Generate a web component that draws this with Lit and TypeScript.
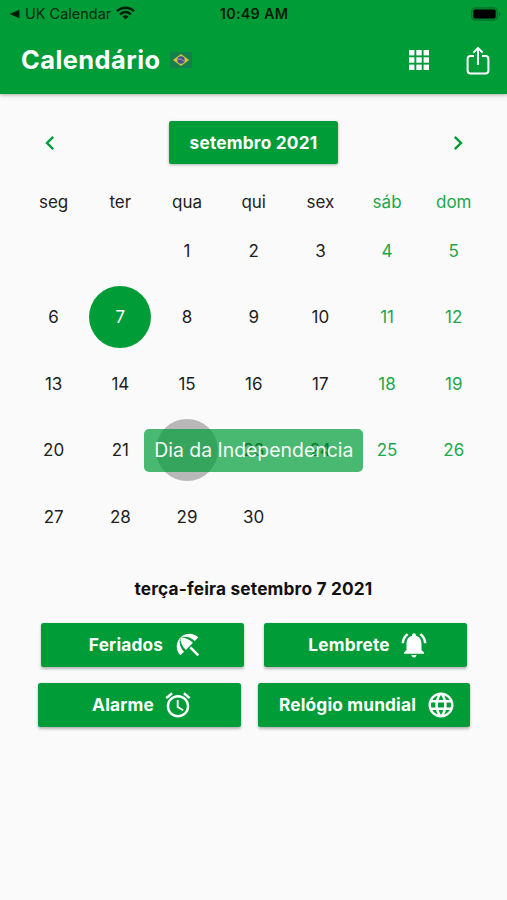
import { LitElement, html, css, svg } from "lit";
import { customElement, property, state } from "lit/decorators.js";
import { classMap } from "lit/directives/class-map.js";

const ICONS: Record<string, string> = {
  beach:
    "M13.127 14.56l1.43-1.43 6.44 6.443L19.57 21zM17.42 8.83l2.86-2.86c-3.95-3.95-10.35-3.96-14.3-.02 3.93-1.3 8.31-.25 11.44 2.88zM5.95 5.98c-3.94 3.95-3.93 10.35.02 14.3l2.86-2.86C5.7 14.29 4.65 9.91 5.95 5.98zM5.97 5.96l-.01.01c-.38 3.01 1.17 6.88 4.3 10.02l5.72-5.73c-3.13-3.13-7.01-4.68-10.01-4.3z",
  bell:
    "M7.58 4.08L6.15 2.65C3.75 4.48 2.17 7.3 2.03 10.5h2c.15-2.65 1.51-4.97 3.55-6.42zm12.39 6.42h2c-.15-3.2-1.73-6.02-4.12-7.85l-1.42 1.43c2.02 1.45 3.39 3.77 3.54 6.42zM18 11c0-3.07-1.64-5.64-4.5-6.32V4c0-.83-.67-1.5-1.5-1.5s-1.5.67-1.5 1.5v.68C7.63 5.36 6 7.92 6 11v5l-2 2v1h16v-1l-2-2v-5zm-6 11c.14 0 .27-.01.4-.04.65-.14 1.18-.58 1.44-1.18.1-.24.15-.5.15-.78h-4c.01 1.1.9 2 2.01 2z",
  alarm:
    "M22 5.72l-4.6-3.86-1.29 1.53 4.6 3.86L22 5.72zM7.88 3.39L6.6 1.86 2 5.71l1.29 1.53 4.59-3.85zM12.5 8H11v6l4.75 2.85.75-1.23-4-2.37V8zM12 4c-4.97 0-9 4.03-9 9s4.02 9 9 9c4.97 0 9-4.03 9-9s-4.03-9-9-9zm0 16c-3.87 0-7-3.13-7-7s3.13-7 7-7 7 3.13 7 7-3.13 7-7 7z",
  globe:
    "M11.99 2C6.47 2 2 6.48 2 12s4.47 10 9.99 10C17.52 22 22 17.52 22 12S17.52 2 11.99 2zm6.93 6h-2.95c-.32-1.25-.78-2.45-1.38-3.56 1.84.63 3.37 1.91 4.33 3.56zM12 4.04c.83 1.2 1.48 2.53 1.91 3.96h-3.82c.43-1.43 1.08-2.76 1.91-3.96zM4.26 14C4.1 13.36 4 12.69 4 12s.1-1.36.26-2h3.38c-.08.66-.14 1.32-.14 2 0 .68.06 1.34.14 2H4.26zm.82 2h2.95c.32 1.25.78 2.45 1.38 3.56-1.84-.63-3.37-1.9-4.33-3.56zm2.95-8H5.08c.96-1.66 2.49-2.93 4.33-3.56C8.81 5.55 8.35 6.75 8.03 8zM12 19.96c-.83-1.2-1.48-2.53-1.91-3.96h3.82c-.43 1.43-1.08 2.76-1.91 3.96zM14.34 14H9.66c-.09-.66-.16-1.32-.16-2 0-.68.07-1.35.16-2h4.68c.09.65.16 1.32.16 2 0 .68-.07 1.34-.16 2zm.25 5.56c.6-1.11 1.06-2.31 1.38-3.56h2.95c-.96 1.65-2.49 2.93-4.33 3.56zM16.36 14c.08-.66.14-1.32.14-2 0-.68-.06-1.34-.14-2h3.38c.16.64.26 1.31.26 2s-.1 1.36-.26 2h-3.38z",
};

@customElement("action-button")
class ActionButton extends LitElement {
  @property() label = "";
  @property() icon = "";

  static styles = css`
    :host {
      display: flex;
      align-items: center;
      justify-content: center;
      box-sizing: border-box;
      height: 44px;
      padding-left: 7.5px;
      gap: 9.5px;
      border-radius: 2.5px;
      background: #009c37;
      color: #fff;
      box-shadow: 0 1.5px 3px rgba(0, 0, 0, 0.28);
      font-weight: 700;
      font-size: 17.3px;
      letter-spacing: 0.16px;
      line-height: 22px;
      white-space: nowrap;
    }
    .icon {
      width: 30px;
      height: 30px;
      flex: none;
      fill: currentColor;
    }
  `;

  render() {
    return html`<span class="label">${this.label}</span>
      <svg class="icon" viewBox="0 0 24 24"><path d=${ICONS[this.icon]}></path></svg>`;
  }
}

@customElement("app-root")
class AppRoot extends LitElement {
  @state() selected = 7;
  @state() pressed = 22;

  static styles = css`
    :host {
      display: block;
      box-sizing: border-box;
      width: 507px;
      height: 900px;
      overflow: hidden;
      background: #fafafa;
      color: #1e1e1e;
      font-family: Inter, "Liberation Sans", sans-serif;
    }
    .header {
      height: 94px;
      background: #009c37;
      box-shadow: 0 1px 4px rgba(0, 0, 0, 0.32);
    }
    .status {
      display: grid;
      grid-template-columns: 1fr auto 1fr;
      align-items: center;
      height: 28px;
      padding: 0 5px 0 9px;
      color: #032a10;
      font-size: 14.4px;
      line-height: 18px;
    }
    .back {
      display: flex;
      align-items: center;
    }
    .back-arrow {
      width: 11px;
      height: 10px;
      margin-right: 5px;
    }
    .back-label {
      letter-spacing: 0.05px;
    }
    .wifi {
      width: 19px;
      height: 14px;
      margin-left: 5px;
      margin-top: -2px;
    }
    .time {
      font-weight: 600;
      letter-spacing: 0.25px;
      margin-right: 3px;
      color: #021c0a;
    }
    .battery {
      width: 32px;
      height: 14px;
      justify-self: end;
      margin-top: -1px;
    }
    .toolbar {
      display: flex;
      align-items: center;
      height: 64px;
      padding: 0 17.5px 0 21px;
    }
    .title {
      color: #fff;
      font-size: 25.4px;
      letter-spacing: 0.45px;
      line-height: 32px;
      font-weight: 700;
    }
    .flag {
      width: 22px;
      height: 16px;
      margin-left: 9px;
    }
    .apps {
      width: 20px;
      height: 20px;
      margin-left: auto;
      margin-right: 36.5px;
      fill: #fff;
    }
    .share {
      width: 24px;
      height: 30px;
      margin-top: 2px;
    }
    .month-bar {
      display: flex;
      align-items: center;
      justify-content: space-between;
      padding: 26.5px 43.5px 0 43.5px;
    }
    .chevron {
      width: 12px;
      height: 16px;
      margin-top: 1px;
      fill: none;
      stroke: #009c37;
      stroke-width: 2.4;
    }
    .month {
      width: 169px;
      height: 43.5px;
      border-radius: 2.5px;
      background: #009c37;
      box-shadow: 0 1px 3px rgba(0, 0, 0, 0.3);
      color: #fff;
      text-align: center;
      font-size: 17.3px;
      letter-spacing: 0.2px;
      font-weight: 700;
      line-height: 43.5px;
    }
    .week,
    .days {
      display: grid;
      grid-template-columns: repeat(7, 66.7px);
      margin-left: 20.3px;
      text-align: center;
      font-size: 17px;
    }
    .week {
      margin-top: 27px;
      height: 26.3px;
      line-height: 23px;
    }
    .days {
      grid-auto-rows: 66.6px;
      line-height: 62px;
    }
    .weekend {
      color: #1ca74d;
    }
    .day {
      width: 62px;
      height: 62px;
      margin: 2.3px auto;
      border-radius: 50%;
    }
    .selected {
      background: #009c37;
      color: #fff;
    }
    .pressed {
      background: #b8b8b8;
      color: #c6c6c6;
    }
    .calendar {
      position: relative;
    }
    .tooltip {
      position: absolute;
      left: 144.3px;
      top: 238px;
      width: 219px;
      height: 43px;
      border-radius: 5px;
      background: rgba(0, 156, 55, 0.71);
      color: #f4fbf6;
      text-align: center;
      font-size: 19.4px;
      line-height: 43px;
      white-space: nowrap;
    }
    .date {
      margin-top: 27.7px;
      height: 22px;
      text-align: center;
      font-size: 17.3px;
      letter-spacing: 0.17px;
      font-weight: 700;
      line-height: 22px;
      color: #111;
    }
    .actions {
      display: flex;
      justify-content: center;
      margin-top: 23px;
    }
    .actions + .actions {
      margin-top: 16.4px;
    }
    .regular {
      width: 203px;
    }
    .wide {
      width: 212px;
    }
    .gap-large {
      gap: 20px;
    }
    .gap-small {
      gap: 17px;
    }
  `;

  renderHeader() {
    return html`<header class="header">
      <div class="status">
        <div class="back">
          <svg class="back-arrow" viewBox="0 0 11 10"><path d="M0.5 5L10.5 0.8V9.2Z" fill="#021c0a" /></svg>
          <span class="back-label">UK Calendar</span>
          <svg class="wifi" viewBox="0 0 19 14">
            <g fill="none" stroke="#021c0a" stroke-width="2.4">
              <path d="M1 5.2C5.6 0.5 13.4 0.5 18 5.2" />
              <path d="M4.1 8.3C7.1 5.2 11.9 5.2 14.9 8.3" />
            </g>
            <path d="M6.5 10.5C8.2 8.9 10.8 8.9 12.5 10.5L9.5 13.5Z" fill="#021c0a" />
          </svg>
        </div>
        <span class="time">10:49 AM</span>
        <svg class="battery" viewBox="0 0 32 14">
          <rect x="1.5" y="0.8" width="26" height="12.4" rx="3.4" fill="#028630" stroke="#047029" />
          <rect x="3.4" y="2.6" width="22.2" height="8.8" rx="1.6" fill="#000" />
          <path d="M29 4.7Q31.6 7 29 9.3Z" fill="#046325" />
        </svg>
      </div>
      <div class="toolbar">
        <span class="title">Calendário</span>
        <svg class="flag" viewBox="0 0 22 16">
          <rect width="22" height="16" rx="1" fill="#16804a" />
          <path d="M11 2L19 8L11 14L3 8Z" fill="#d3c73c" />
          <circle cx="11" cy="8" r="3.7" fill="#485292" />
          <path d="M7.7 7Q11.5 6.2 14.2 9.4" fill="none" stroke="#a9b3cd" stroke-width="0.8" />
        </svg>
        <svg class="apps" viewBox="0 0 20 20">
          ${[0, 7.3, 14.6].map((y) =>
            [0, 7.3, 14.6].map((x) => svg`<rect x=${x} y=${y} width="5.4" height="5.4" />`)
          )}
        </svg>
        <svg class="share" viewBox="0 0 24 30" fill="none" stroke="#fff" stroke-width="2">
          <path d="M8 10H4.6Q1.6 10 1.6 13V24.6Q1.6 27.6 4.6 27.6H19.4Q22.4 27.6 22.4 24.6V13Q22.4 10 19.4 10H16" />
          <path d="M12 19V2.2M7.4 6.6L12 2L16.6 6.6" />
        </svg>
      </div>
    </header>`;
  }

  renderDay(day: number) {
    const col = (day + 1) % 7;
    return html`<div
      class=${classMap({
        day: true,
        weekend: col > 4,
        selected: day === this.selected,
        pressed: day === this.pressed,
      })}
    >${day}</div>`;
  }

  render() {
    const names = ["seg", "ter", "qua", "qui", "sex", "sáb", "dom"];
    return html`${this.renderHeader()}
      <main>
        <div class="month-bar">
          <svg class="chevron" viewBox="0 0 12 16"><path d="M9.2 1.8L3 8L9.2 14.2" /></svg>
          <div class="month">setembro 2021</div>
          <svg class="chevron" viewBox="0 0 12 16"><path d="M2.8 1.8L9 8L2.8 14.2" /></svg>
        </div>
        <div class="calendar">
          <div class="week">
            ${names.map((n, i) => html`<span class=${classMap({ weekend: i > 4 })}>${n}</span>`)}
          </div>
          <div class="days">
            <span></span><span></span>
            ${Array.from({ length: 30 }, (_, i) => this.renderDay(i + 1))}
          </div>
          <div class="tooltip">Dia da Independencia</div>
        </div>
        <div class="date">terça-feira setembro 7 2021</div>
        <div class="actions gap-large">
          <action-button class="regular" label="Feriados" icon="beach"></action-button>
          <action-button class="regular" label="Lembrete" icon="bell"></action-button>
        </div>
        <div class="actions gap-small">
          <action-button class="regular" label="Alarme" icon="alarm"></action-button>
          <action-button class="wide" label="Relógio mundial" icon="globe"></action-button>
        </div>
      </main>`;
  }
}
